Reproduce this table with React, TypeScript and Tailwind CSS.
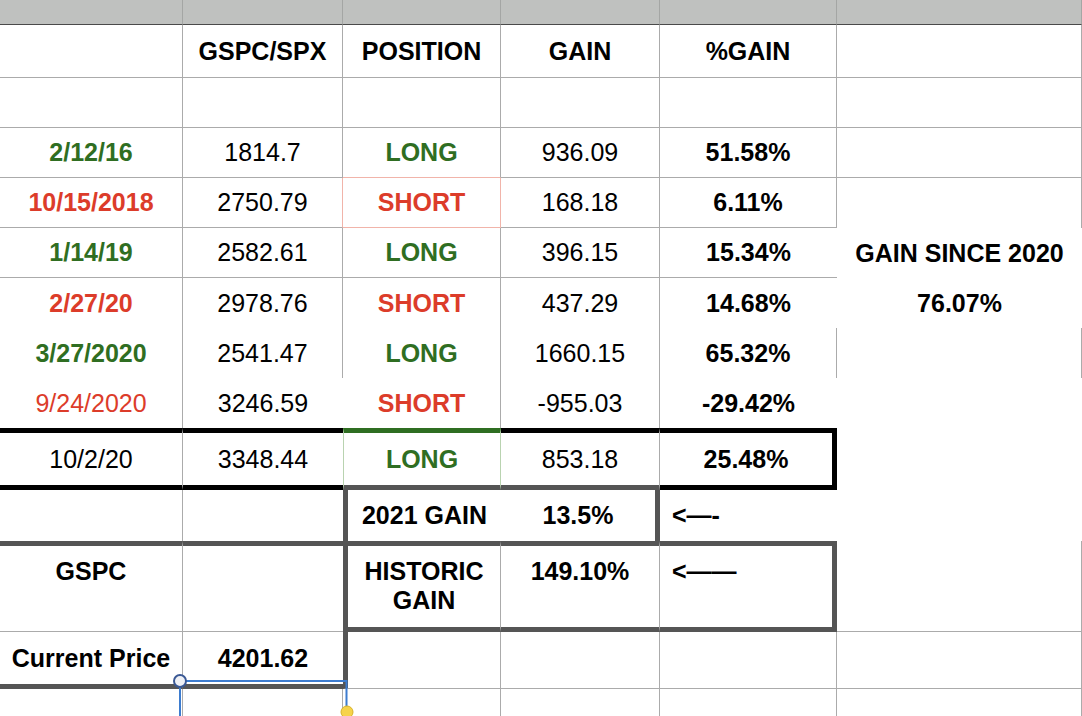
import React from 'react'

const green = 'text-[#2f6e22]'
const red = 'text-[#dc3c2a]'

type CellProps = { className?: string; children?: React.ReactNode }

const Cell = ({ className = '', children }: CellProps) => (
  <div className={'flex items-center justify-center leading-[29px] ' + className}>{children}</div>
)

// thin grid line helpers
const r = 'border-r border-r-[#ababab]'
const b = 'border-b border-b-[#ababab]'
const rb = r + ' ' + b

export default function App() {
  return (
    <div className="relative w-[1082px] h-[716px] overflow-hidden bg-white text-black text-[25px] font-['Liberation_Sans',Arial,sans-serif]">
      <div className="grid h-full grid-cols-[183px_160px_158px_159px_177px_1fr] grid-rows-[25px_53px_50px_50px_50px_50px_50px_50px_50px_62px_51px_91px_57px_27px]">
        {/* gray column header band */}
        {[0, 1, 2, 3, 4, 5].map((i) => (
          <div key={i} className="bg-[#bfc1bf] border-r border-b border-r-[#a4a6a4] border-b-[#4a4a4a]" />
        ))}

        {/* header row */}
        <Cell className={rb} />
        <Cell className={rb + ' font-bold'}>GSPC/SPX</Cell>
        <Cell className={rb + ' font-bold'}>POSITION</Cell>
        <Cell className={rb + ' font-bold'}>GAIN</Cell>
        <Cell className={rb + ' font-bold'}>%GAIN</Cell>
        <Cell className={rb} />

        {/* blank row */}
        <Cell className={rb} />
        <Cell className={rb} />
        <Cell className={rb} />
        <Cell className={rb} />
        <Cell className={rb} />
        <Cell className={rb} />

        {/* 2/12/16 */}
        <Cell className={rb + ' font-bold ' + green}>2/12/16</Cell>
        <Cell className={rb}>1814.7</Cell>
        <Cell className={r + ' border-b border-b-[#f1b4aa] font-bold ' + green}>LONG</Cell>
        <Cell className={rb}>936.09</Cell>
        <Cell className={rb + ' font-bold'}>51.58%</Cell>
        <Cell className={rb} />

        {/* 10/15/2018 */}
        <Cell className={rb + ' font-bold ' + red}>10/15/2018</Cell>
        <Cell className={b + ' border-r border-r-[#f1b4aa]'}>2750.79</Cell>
        <Cell className={'border-r border-b border-[#f1b4aa] font-bold ' + red}>SHORT</Cell>
        <Cell className={rb}>168.18</Cell>
        <Cell className={rb + ' font-bold'}>6.11%</Cell>
        <Cell className={r} />

        {/* 1/14/19 */}
        <Cell className={rb + ' font-bold ' + green}>1/14/19</Cell>
        <Cell className={rb}>2582.61</Cell>
        <Cell className={rb + ' font-bold ' + green}>LONG</Cell>
        <Cell className={rb}>396.15</Cell>
        <Cell className={b + ' font-bold'}>15.34%</Cell>
        <Cell className="font-bold">GAIN SINCE 2020</Cell>

        {/* 2/27/20 */}
        <Cell className={r + ' font-bold ' + red}>2/27/20</Cell>
        <Cell className={r}>2978.76</Cell>
        <Cell className={r + ' font-bold ' + red}>SHORT</Cell>
        <Cell className={r}>437.29</Cell>
        <Cell className="font-bold">14.68%</Cell>
        <Cell className="font-bold">76.07%</Cell>

        {/* 3/27/2020 */}
        <Cell className={r + ' font-bold ' + green}>3/27/2020</Cell>
        <Cell className={r}>2541.47</Cell>
        <Cell className={r + ' font-bold ' + green}>LONG</Cell>
        <Cell className={r}>1660.15</Cell>
        <Cell className={r + ' font-bold'}>65.32%</Cell>
        <Cell className={r} />

        {/* 9/24/2020 */}
        <Cell className={r + ' ' + red}>9/24/2020</Cell>
        <Cell>3246.59</Cell>
        <Cell className={r + ' font-bold ' + red}>SHORT</Cell>
        <Cell className={r}>-955.03</Cell>
        <Cell className="font-bold">-29.42%</Cell>
        <Cell />

        {/* 10/2/20 */}
        <Cell className={r + ' border-y-[5px] border-y-black'}>10/2/20</Cell>
        <Cell className="border-y-[5px] border-y-black">3348.44</Cell>
        <Cell className={'border-x border-x-[#b9d3b0] border-t-[5px] border-t-[#2f6e22] border-b-[5px] border-b-[#555555] font-bold ' + green}>
          LONG
        </Cell>
        <Cell className={r + ' border-t-[5px] border-t-black border-b-[5px] border-b-[#555555]'}>853.18</Cell>
        <Cell className="border-y-[5px] border-y-black border-r-[5px] border-r-black font-bold">25.48%</Cell>
        <Cell />

        {/* 2021 gain */}
        <Cell className={r} />
        <Cell />
        <Cell className="border-l-[5px] border-l-[#555555] font-bold">2021 GAIN</Cell>
        <Cell className="border-r-[5px] border-r-[#555555] font-bold">13.5%</Cell>
        <Cell className="justify-start pl-3 font-bold">&lt;—-</Cell>
        <Cell />

        {/* GSPC / historic gain */}
        <Cell className={'items-start pt-[11px] border-t-[5px] border-t-[#555555] font-bold ' + rb}>GSPC</Cell>
        <Cell className={'border-t-[5px] border-t-[#555555] ' + b} />
        <Cell className={'items-start pt-[11px] text-center border-[5px] border-[#555555] border-r border-r-[#ababab] font-bold'}>
          HISTORIC
          <br />
          GAIN
        </Cell>
        <Cell className={'items-start pt-[11px] border-y-[5px] border-y-[#555555] font-bold ' + r}>149.10%</Cell>
        <Cell className="items-start justify-start pt-[11px] pl-3 border-y-[5px] border-r-[5px] border-[#555555] font-bold">
          &lt;——
        </Cell>
        <Cell className={rb} />

        {/* current price */}
        <Cell className={r + ' border-b-[5px] border-b-[#555555] font-bold'}>Current Price</Cell>
        <Cell className="border-b-[5px] border-b-[#555555] font-bold">4201.62</Cell>
        <Cell className={'border-l-[5px] border-l-[#555555] ' + rb} />
        <Cell className={rb} />
        <Cell className={rb} />
        <Cell className={rb} />

        {/* last partial row */}
        <Cell className={r} />
        <Cell className={r} />
        <Cell className={r} />
        <Cell className={r} />
        <Cell className={r} />
        <Cell className={r} />
      </div>

      {/* cell selection handles */}
      <svg className="pointer-events-none absolute inset-0" width="1082" height="716" viewBox="0 0 1082 716">
        <path d="M180 716 V681 H346.5 V716" fill="none" stroke="#3d7ccf" strokeWidth="2" />
        <circle cx="180" cy="681" r="6" fill="#eef0f5" stroke="#3a5894" strokeWidth="2" />
        <circle cx="347" cy="712" r="6" fill="#f6d34a" stroke="#d8b32a" strokeWidth="1" />
      </svg>
    </div>
  )
}
